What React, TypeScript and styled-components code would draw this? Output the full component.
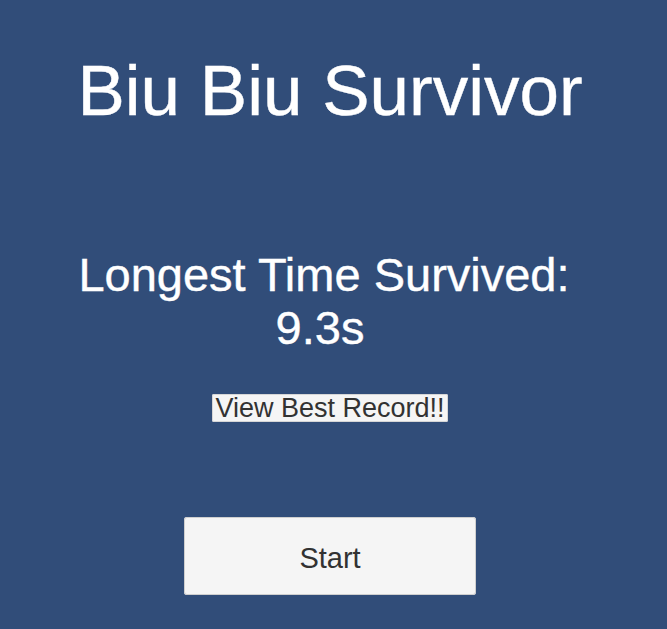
import React from "react";
import styled, { createGlobalStyle } from "styled-components";

const GlobalStyle = createGlobalStyle`
  html, body {
    margin: 0;
    padding: 0;
    background: #314d79;
  }
  body {
    font-family: "Liberation Sans", Arial, sans-serif;
  }
`;

const Screen = styled.main`
  width: 667px;
  height: 629px;
  box-sizing: border-box;
  padding: 56px 7px 0 0;
  display: flex;
  flex-direction: column;
  align-items: center;
  overflow: hidden;
  background: #314d79;
`;

const Title = styled.h1`
  margin: 0;
  font-size: 71px;
  line-height: 70px;
  font-weight: 400;
  color: #ffffff;
  white-space: nowrap;
  -webkit-text-stroke: 0.4px #ffffff;
`;

const Record = styled.div`
  margin-top: 122px;
  display: flex;
  flex-direction: column;
  align-items: center;
`;

const RecordLine = styled.div<{ $shift: number }>`
  font-size: 47px;
  line-height: 53px;
  color: #ffffff;
  white-space: pre;
  -webkit-text-stroke: 0.4px #ffffff;
  transform: translateX(${(p) => p.$shift}px);
`;

const LinkButton = styled.button`
  margin-top: 40px;
  height: 28px;
  width: 236px;
  padding: 0;
  display: flex;
  justify-content: center;
  font-family: "Liberation Sans", Arial, sans-serif;
  font-size: 27px;
  line-height: 28px;
  color: #323232;
  background: #f5f5f5;
  border: none;
  border-radius: 2px;
  box-shadow: inset 0 0 0 1px #d6d6d6;
  white-space: nowrap;
`;

const StartButton = styled.button`
  margin-top: 95px;
  width: 292px;
  height: 78px;
  padding: 4px 0 0;
  display: flex;
  align-items: center;
  justify-content: center;
  font-family: "Liberation Sans", Arial, sans-serif;
  font-size: 29px;
  line-height: 29px;
  color: #323232;
  background: #f5f5f5;
  border: none;
  border-radius: 3px;
  box-shadow: inset 0 0 0 1px #cfcfcf;
`;

export default function App() {
  return (
    <>
      <GlobalStyle />
      <Screen>
        <Title>Biu Biu Survivor</Title>
        <Record>
          <RecordLine $shift={-6}>Longest Time Survived:</RecordLine>
          <RecordLine $shift={-10}>9.3s</RecordLine>
        </Record>
        <LinkButton>View Best Record!!</LinkButton>
        <StartButton>Start</StartButton>
      </Screen>
    </>
  );
}
